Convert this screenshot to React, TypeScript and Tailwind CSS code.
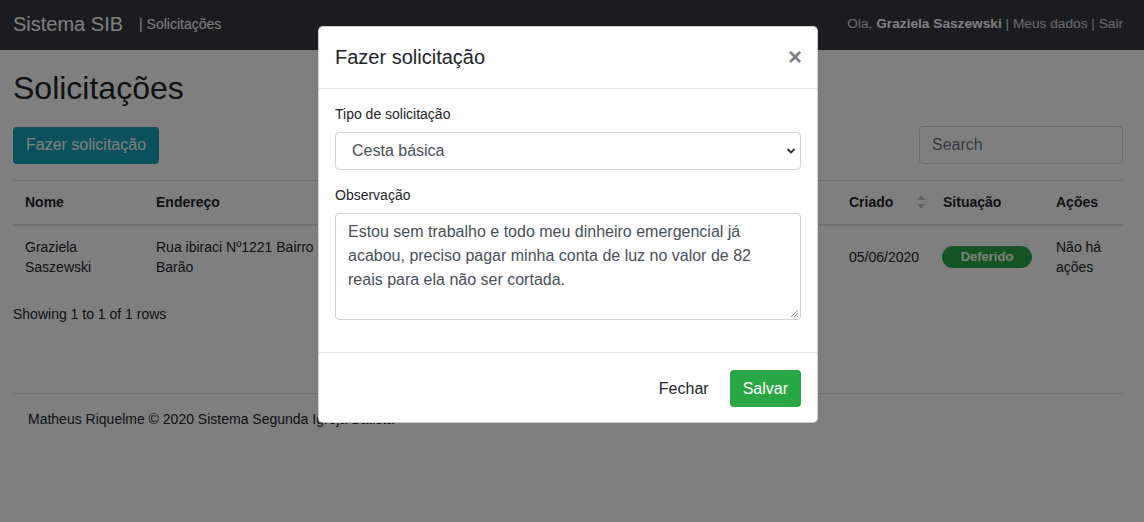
import React from "react";

const font = { fontFamily: '"Liberation Sans", Arial, sans-serif' };

const SortIcon: React.FC = () => (
  <svg width="8" height="14" viewBox="0 0 8 14" className="-mr-[6px] inline-block">
    <path d="M4 0 L8 5 L0 5 Z" fill="#c8c8c8" />
    <path d="M4 14 L8 9 L0 9 Z" fill="#c8c8c8" />
  </svg>
);

const Navbar: React.FC = () => (
  <nav className="flex h-[50px] items-center justify-between bg-[#343a40] pb-[2px] pl-[13px] pr-[21px]">
    <div className="flex items-center">
      <span className="text-[20px] text-white">Sistema SIB</span>
      <span className="ml-[16px] text-sm text-white">| Solicitações</span>
    </div>
    <div className="text-[13.7px] text-white/80">
      Ola, <b className="text-white">Graziela Saszewski</b> | Meus dados <span className="text-[#a8c8ff]">|</span> Sair
    </div>
  </nav>
);

// the middle columns sit behind the open modal
const RequestsTable: React.FC = () => (
  <table className="w-full table-fixed border-collapse text-sm leading-5 text-[#212529]">
    <colgroup>
      <col className="w-[131px]" />
      <col className="w-[186px]" />
      <col />
      <col />
      <col className="w-[94px]" />
      <col className="w-[113px]" />
      <col className="w-[79px]" />
    </colgroup>
    <thead>
      <tr className="border-t border-[#dee2e6]">
        <th className="border-b-2 border-[#dee2e6] px-3 pb-[12px] pt-[11px] text-left font-bold">Nome</th>
        <th className="border-b-2 border-[#dee2e6] px-3 pb-[12px] pt-[11px] text-left font-bold">Endereço</th>
        <th className="border-b-2 border-[#dee2e6] px-3 pb-[12px] pt-[11px] text-left font-bold" />
        <th className="border-b-2 border-[#dee2e6] px-3 pb-[12px] pt-[11px] text-left font-bold" />
        <th className="border-b-2 border-[#dee2e6] px-3 pb-[12px] pt-[11px] text-left font-bold">
          <div className="flex items-center justify-between">
            <span>Criado</span>
            <SortIcon />
          </div>
        </th>
        <th className="border-b-2 border-[#dee2e6] px-3 pb-[12px] pt-[11px] text-left font-bold">Situação</th>
        <th className="border-b-2 border-[#dee2e6] px-3 pb-[12px] pt-[11px] text-left font-bold">Ações</th>
      </tr>
    </thead>
    <tbody>
      <tr>
        <td className="px-3 py-[11px] align-middle">Graziela Saszewski</td>
        <td className="px-3 py-[11px] align-middle">Rua ibiraci Nº1221 Bairro Barão</td>
        <td className="px-3 py-[11px] align-middle" />
        <td className="px-3 py-[11px] align-middle" />
        <td className="px-3 py-[11px] align-middle">05/06/2020</td>
        <td className="px-3 py-[11px] align-middle">
          <span className="-ml-[1px] inline-block w-[90px] rounded-full bg-[#28a745] py-[1px] text-center text-[13px] font-bold text-white">
            Deferido
          </span>
        </td>
        <td className="px-3 py-[11px] align-middle">Não há ações</td>
      </tr>
    </tbody>
  </table>
);

const Modal: React.FC = () => (
  <div className="absolute inset-0 bg-black/50">
    <div className="ml-[318px] mt-[26px] w-[500px] rounded-[5px] border border-black/20 bg-white text-[#212529]">
      <div className="flex items-start justify-between border-b border-[#dee2e6] px-4 pb-[19px] pt-[18px]">
        <h5 className="text-[20px] leading-6">Fazer solicitação</h5>
        <button className="mr-[-1px] text-[24px] font-bold leading-6 text-black/50">×</button>
      </div>
      <div className="px-4 pb-[32px] pt-[15px]">
        <label className="block text-sm leading-5">Tipo de solicitação</label>
        <div className="relative mt-[8px]">
          <div className="flex h-[38px] items-center rounded border border-[#ced4da] pl-[16px] text-base text-[#495057]">
            Cesta básica
          </div>
          <svg className="absolute right-[5px] top-[14px]" width="10" height="10" viewBox="0 0 10 10">
            <path d="M1.5 3 L5 6.5 L8.5 3" stroke="#333" strokeWidth="1.8" fill="none" />
          </svg>
        </div>
        <label className="mt-[15px] block text-sm leading-5">Observação</label>
        <div className="relative mt-[8px]">
          <div className="h-[107px] rounded border border-[#ced4da] px-3 py-[6px] text-base leading-6 text-[#495057]">
            Estou sem trabalho e todo meu dinheiro emergencial já acabou, preciso pagar minha conta de luz no valor de 82
            reais para ela não ser cortada.
          </div>
          <svg className="absolute bottom-[2px] right-[2px]" width="9" height="9" viewBox="0 0 9 9">
            <path d="M8 1 L1 8 M8 4 L4 8 M8 7 L7 8" stroke="#999" strokeWidth="1" />
          </svg>
        </div>
      </div>
      <div className="flex items-center justify-end gap-[21px] border-t border-[#dee2e6] px-4 pb-[15px] pt-[17px]">
        <button className="text-base text-[#212529]">Fechar</button>
        <button className="h-[37px] rounded bg-[#28a745] px-[13px] text-base text-white">Salvar</button>
      </div>
    </div>
  </div>
);

export default function App() {
  return (
    <div className="relative h-[522px] overflow-hidden bg-white" style={font}>
      <Navbar />
      <main className="pl-[13px] pr-[21px]">
        <h2 className="mt-[19px] text-[32px] leading-[38px] text-[#212529]">Solicitações</h2>
        <div className="mt-[19px] flex items-center justify-between">
          <button className="h-[37px] rounded bg-[#17a2b8] px-[13px] text-base text-white">Fazer solicitação</button>
          <div className="flex h-[38px] w-[204px] items-center rounded border border-[#ced4da] px-3 text-base text-[#6c757d]">
            Search
          </div>
        </div>
        <div className="mt-[16px]">
          <RequestsTable />
        </div>
        <p className="mt-[16px] text-sm leading-5 text-[#212529]">Showing 1 to 1 of 1 rows</p>
        <hr className="mt-[69px] border-[#dee2e6]" />
        <p className="mt-[15px] pl-[15px] text-sm text-[#212529]">
          Matheus Riquelme © 2020 Sistema Segunda Igreja Batista
        </p>
      </main>
      <Modal />
    </div>
  );
}
